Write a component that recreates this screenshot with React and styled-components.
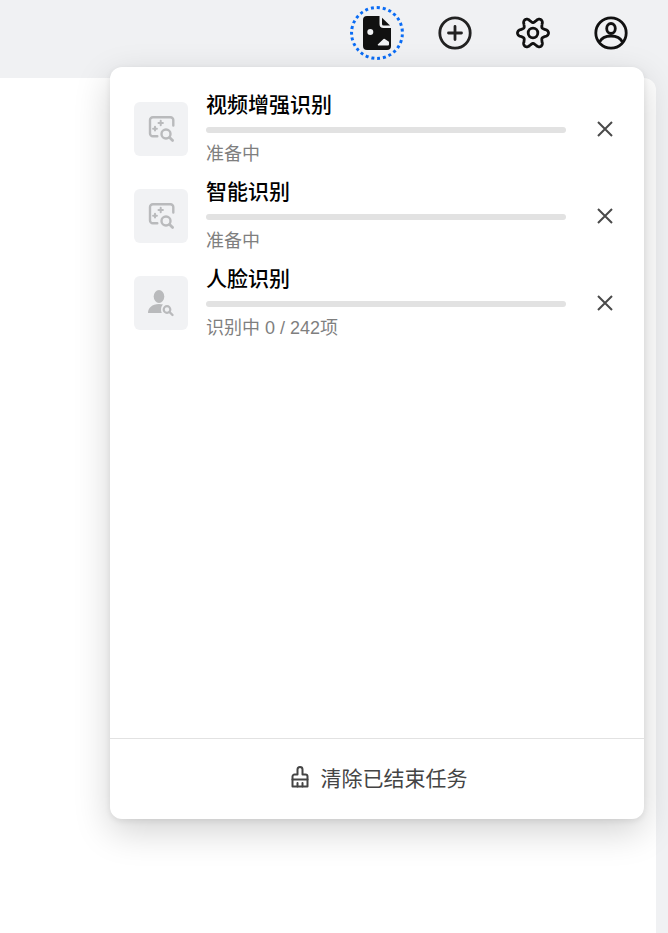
import React from 'react';
import styled, { createGlobalStyle } from 'styled-components';

const GlobalStyle = createGlobalStyle`
  html, body {
    margin: 0;
    padding: 0;
    background: #f0f1f3;
    font-family: 'Liberation Sans', 'Noto Sans CJK SC', sans-serif;
  }
`;

const tasks = [
  { id: 1, title: '视频增强识别', status: '准备中', kind: 'image' },
  { id: 2, title: '智能识别', status: '准备中', kind: 'image' },
  { id: 3, title: '人脸识别', status: '识别中 0 / 242项', kind: 'face' },
];

// six squarish lobes, the widest pair on the horizontal axis
const gearPath = () => {
  const points = [];
  for (let i = 0; i < 240; i += 1) {
    const a = (i / 240) * Math.PI * 2;
    const c = Math.cos(a * 6);
    const r = c > 0 ? 12.8 + 2.7 * Math.pow(c, 0.7) : 12.8 + 2.4 * c;
    points.push(`${(17 + r * Math.cos(a)).toFixed(2)} ${(17 + r * Math.sin(a)).toFixed(2)}`);
  }
  return `M${points.join('L')}Z`;
};

const ImageSearchIcon = () => (
  <svg width="28" height="28" viewBox="0 0 28 28" fill="none" stroke="#b9babc" strokeWidth="2.400" strokeLinecap="round">
    <path d="M10.300 21.300H5.800A2.800 2.800 0 0 1 3 18.500V5.100A2.800 2.800 0 0 1 5.800 2.300H23.500A2.800 2.800 0 0 1 26.300 5.100V10.500" />
    <path d="M13.700 5.800v4.400M11.500 8h4.400M8 11.800v3.800M6.100 13.700h3.800" strokeWidth="2" />
    <circle cx="19" cy="19" r="4.500" />
    <path d="M22.600 22.600l3 3" strokeWidth="2.800" />
  </svg>
);

const FaceSearchIcon = () => (
  <svg width="28" height="28" viewBox="0 0 28 28" fill="#b9babc">
    <ellipse cx="12" cy="7.500" rx="5.300" ry="6.500" />
    <path d="M1 24c0-5 4-9 11-9 1.500 0 2.800.2 4 .5-1.800 1.500-2.600 5-1.200 8.500z" />
    <circle cx="20" cy="20.500" r="3.300" fill="none" stroke="#b9babc" strokeWidth="2.200" />
    <path d="M22.500 23l3 3" stroke="#b9babc" strokeWidth="2.400" strokeLinecap="round" />
  </svg>
);

const CloseIcon = () => (
  <svg width="16" height="16" viewBox="0 0 16 16" fill="none" stroke="#4a4a4a" strokeWidth="2">
    <path d="M1 1l14 14M15 1L1 15" />
  </svg>
);

const BrushIcon = () => (
  <svg width="18" height="22" viewBox="0 0 18 22" fill="none" stroke="#444" strokeWidth="2" strokeLinejoin="round" strokeLinecap="round">
    <path d="M1.500 20.500V10.500a2 2 0 0 1 2-2h3V3.500a2.500 2.500 0 0 1 5 0v5h3a2 2 0 0 1 2 2v10z" />
    <path d="M1.500 13.500h15M6.500 20.500V17M11.500 20.500V17" />
  </svg>
);

const FileIcon = () => (
  <svg width="28" height="34" viewBox="0 0 28 34">
    <path
      fill="#111"
      fillRule="evenodd"
      d="M4 0h12.500v8a4 4 0 0 0 4 4H28v18a4 4 0 0 1-4 4H4a4 4 0 0 1-4-4V4a4 4 0 0 1 4-4zM7.300 13a3 3 0 1 0 0 6 3 3 0 0 0 0-6zM20.500 23L15 28.300a.6.6 0 0 0 .4 1.100H25a1 1 0 0 0 1-1v-2a1 1 0 0 0-.4-.8l-3.800-2.600a1 1 0 0 0-1.300 0z"
    />
    <path fill="#111" d="M19 1.700L27 9.500h-6.500a1.500 1.500 0 0 1-1.500-1.500z" />
  </svg>
);

const PlusIcon = () => (
  <svg width="34" height="34" viewBox="0 0 34 34" fill="none" stroke="#222" strokeWidth="2.800" strokeLinecap="round">
    <circle cx="17" cy="17" r="15.200" />
    <path d="M17 10.500v13M10.500 17h13" />
  </svg>
);

const GearIcon = () => (
  <svg width="34" height="34" viewBox="0 0 34 34" fill="none" stroke="#111" strokeWidth="2.800" strokeLinejoin="round">
    <path d={gearPath()} />
    <circle cx="17" cy="17" r="4.800" />
  </svg>
);

const UserIcon = () => (
  <svg width="34" height="34" viewBox="0 0 34 34" fill="none" stroke="#111" strokeWidth="2.800">
    <circle cx="17" cy="17" r="15.200" />
    <ellipse cx="17" cy="12.500" rx="4.300" ry="5" />
    <path d="M5.500 26c2-4 6.500-6 11.500-6s9.500 2 11.500 6" />
  </svg>
);

const TaskIcons = { image: ImageSearchIcon, face: FaceSearchIcon };

const App = () => {
  return (
    <Page>
      <GlobalStyle />
      <Header>
        <HeaderButton $focused aria-label="任务">
          <FileIcon />
        </HeaderButton>
        <HeaderButton aria-label="添加">
          <PlusIcon />
        </HeaderButton>
        <HeaderButton aria-label="设置">
          <GearIcon />
        </HeaderButton>
        <HeaderButton aria-label="账户">
          <UserIcon />
        </HeaderButton>
      </Header>
      <Main />
      <Popover>
        <TaskList>
          {tasks.map((task) => {
            const Icon = TaskIcons[task.kind];
            return (
              <TaskRow key={task.id}>
                <Thumb>
                  <Icon />
                </Thumb>
                <TaskBody>
                  <TaskTitle>{task.title}</TaskTitle>
                  <Progress />
                  <TaskStatus>{task.status}</TaskStatus>
                </TaskBody>
                <CloseButton aria-label="关闭">
                  <CloseIcon />
                </CloseButton>
              </TaskRow>
            );
          })}
        </TaskList>
        <Footer>
          <BrushIcon />
          <FooterLabel>清除已结束任务</FooterLabel>
        </Footer>
      </Popover>
    </Page>
  );
};

const Page = styled.div`
  position: relative;
  width: 668px;
  height: 933px;
  overflow: hidden;
  background: #f0f1f3;
`;

const Header = styled.header`
  height: 78px;
  box-sizing: border-box;
  padding: 6px 30px 0 0;
  display: flex;
  justify-content: flex-end;
  align-items: flex-start;
  gap: 24px;
`;

const HeaderButton = styled.button`
  width: 54px;
  height: 54px;
  box-sizing: border-box;
  padding: 0;
  background: none;
  display: flex;
  align-items: center;
  justify-content: center;
  border-radius: 50%;
  border: ${({ $focused }) => ($focused ? '3px dotted #0a6cf5' : 'none')};
`;

const Main = styled.main`
  width: 656px;
  height: 855px;
  background: #fff;
  border-top-right-radius: 12px;
`;

const Popover = styled.div`
  position: absolute;
  top: 67px;
  left: 110px;
  width: 534px;
  height: 752px;
  display: flex;
  flex-direction: column;
  background: #fff;
  border-radius: 12px;
  box-shadow: 0 12px 36px rgba(0, 0, 0, 0.18), 0 2px 6px rgba(0, 0, 0, 0.08);
`;

const TaskList = styled.div`
  flex: 1;
  padding: 35px 24px 0;
  display: flex;
  flex-direction: column;
  gap: 33px;
`;

const TaskRow = styled.div`
  height: 54px;
  display: flex;
  align-items: center;
`;

const Thumb = styled.div`
  width: 54px;
  height: 54px;
  flex: none;
  border-radius: 6px;
  background: #f1f2f4;
  display: flex;
  align-items: center;
  justify-content: center;
`;

const TaskBody = styled.div`
  width: 360px;
  margin-left: 18px;
  display: flex;
  flex-direction: column;
  align-self: flex-start;
  margin-top: -12px;
`;

const TaskTitle = styled.div`
  font-size: 21px;
  line-height: 30px;
  font-weight: 500;
  color: #000;
`;

const Progress = styled.div`
  height: 6px;
  margin-top: 7px;
  border-radius: 3px;
  background: #e2e2e2;
`;

const TaskStatus = styled.div`
  margin-top: 8px;
  font-size: 18px;
  line-height: 26px;
  color: #7f7f7f;
`;

const CloseButton = styled.button`
  margin-left: 31px;
  padding: 0;
  border: none;
  background: none;
  display: flex;
`;

const Footer = styled.div`
  height: 81px;
  box-sizing: border-box;
  flex: none;
  padding: 0 0 5px 4px;
  border-top: 1px solid #e2e2e2;
  display: flex;
  align-items: center;
  justify-content: center;
  gap: 12px;
`;

const FooterLabel = styled.span`
  font-size: 21px;
  color: #444;
`;

export default App;
